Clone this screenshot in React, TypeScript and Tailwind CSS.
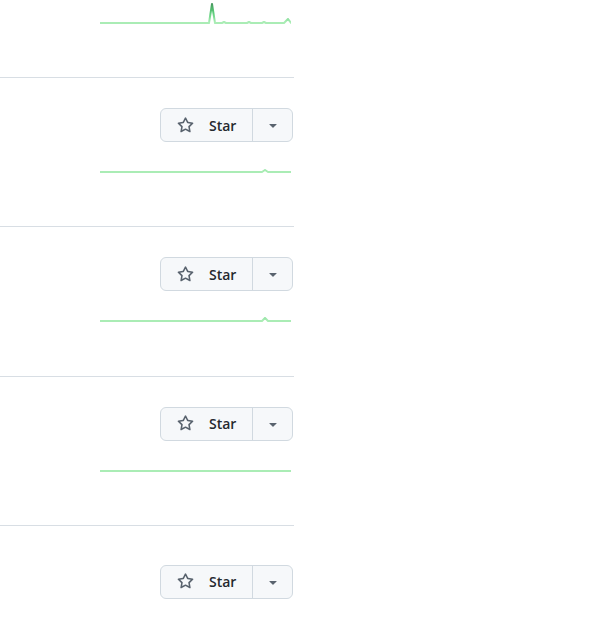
const rows: { points: string; pt: string }[] = [
  {
    points:
      "0,28 109,28 112,9 115,28 122,28 124,27 126,28 147,28 149,27 151,28 162,28 164,27 166,28 184,28 188,24 191,28",
    pt: "pt-[30px]",
  },
  { points: "0,28 162,28 165,26 168,28 191,28", pt: "pt-[30px]" },
  { points: "0,28 162,28 165,25 168,28 191,28", pt: "pt-[30px]" },
  { points: "0,28 191,28", pt: "pt-[30px]" },
  { points: "0,28 191,28", pt: "pt-[39px]" },
];

function StarIcon() {
  return (
    <svg width="17" height="17" viewBox="0 0 16 16" fill="#59636e">
      <path d="M8 .25a.75.75 0 0 1 .673.418l1.882 3.815 4.21.612a.75.75 0 0 1 .416 1.279l-3.046 2.97.719 4.192a.751.751 0 0 1-1.088.791L8 12.347l-3.766 1.98a.75.75 0 0 1-1.088-.79l.72-4.194L.818 6.374a.75.75 0 0 1 .416-1.28l4.21-.611L7.327.668A.75.75 0 0 1 8 .25Zm0 2.445L6.615 5.5a.75.75 0 0 1-.564.41l-3.097.45 2.24 2.184a.75.75 0 0 1 .216.664l-.528 3.084 2.769-1.456a.75.75 0 0 1 .698 0l2.77 1.456-.53-3.084a.75.75 0 0 1 .216-.664l2.24-2.183-3.096-.45a.75.75 0 0 1-.564-.41L8 2.694Z" />
    </svg>
  );
}

function Caret() {
  return (
    <svg width="16" height="16" viewBox="0 0 16 16" fill="#59636e">
      <path d="m4.427 7.427 3.396 3.396a.25.25 0 0 0 .354 0l3.396-3.396A.25.25 0 0 0 11.396 7H4.604a.25.25 0 0 0-.177.427Z" />
    </svg>
  );
}

function StarButton() {
  return (
    <div className="mr-[1px] flex h-[34px] overflow-hidden rounded-md border border-[#d1d9e0] bg-[#f6f8fa] text-[14px] font-semibold text-[#25292e]">
      <div className="flex w-[91px] items-center pl-[16px]">
        <StarIcon />
        <span className="ml-[15px]">Star</span>
      </div>
      <div className="flex w-[40px] items-center justify-center border-l border-[#d1d9e0]">
        <Caret />
      </div>
    </div>
  );
}

function Sparkline({ points, id }: { points: string; id: string }) {
  return (
    <svg width="191" height="30" viewBox="0 0 191 30" className="ml-[100px] mt-[2px] block">
      <defs>
        <linearGradient id={id} gradientUnits="userSpaceOnUse" x1="0" y1="30" x2="0" y2="0">
          <stop offset="10%" stopColor="#9be9a8" />
          <stop offset="40%" stopColor="#40c463" />
          <stop offset="60%" stopColor="#30a14e" />
          <stop offset="80%" stopColor="#216e39" />
        </linearGradient>
      </defs>
      <polyline
        points={points}
        fill="none"
        stroke={`url(#${id})`}
        strokeWidth="2"
        strokeLinejoin="round"
        strokeLinecap="round"
        opacity="0.85"
      />
    </svg>
  );
}

export default function App() {
  return (
    <div
      className="h-[627px] w-[605px] overflow-hidden bg-white"
      style={{ fontFamily: '"Open Sans", "Noto Sans", "Liberation Sans", sans-serif' }}
    >
      <ul className="-mt-[71.33px] w-[294px]">
        {rows.map((row, i) => (
          <li key={i} className={`border-b border-[#d8dee4] pb-[52.33px] ${row.pt}`}>
            <div className="flex justify-end">
              <StarButton />
            </div>
            <Sparkline points={row.points} id={`spark-${i}`} />
          </li>
        ))}
      </ul>
    </div>
  );
}
